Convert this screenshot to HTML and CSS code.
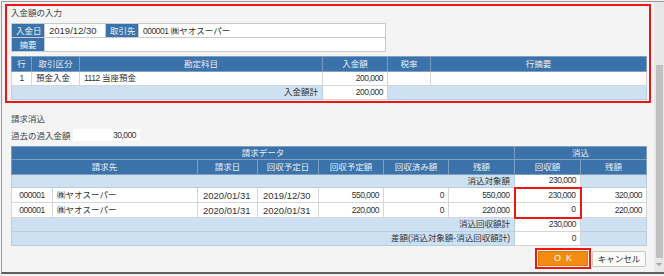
FILE: index.html
```html
<!DOCTYPE html>
<html lang="ja">
<head>
<meta charset="utf-8">
<title>入金額の入力</title>
<link rel="stylesheet" href="styles.css">
</head>
<body>
<div class="window">
  <div class="content">
    <section class="entry">
      <div class="sec-title">入金額の入力</div>
      <table class="info">
        <colgroup><col class="w33"><col class="w61"><col class="w33"><col class="w247"></colgroup>
        <tr><th>入金日</th><td class="date">2019/12/30</td><th>取引先</th><td><span class="num">000001</span> ㈱ヤオスーパー</td></tr>
        <tr><th>摘要</th><td colspan="3"></td></tr>
      </table>
      <table class="grid">
        <colgroup><col class="w20"><col class="w48"><col class="w243"><col class="w65"><col class="w43"><col class="w216"></colgroup>
        <thead>
          <tr class="h15"><th>行</th><th>取引区分</th><th>勘定科目</th><th>入金額</th><th>税率</th><th>行摘要</th></tr>
        </thead>
        <tbody>
          <tr class="h14"><td class="c num">1</td><td>預金入金</td><td><span class="num">1112</span> 当座預金</td><td class="r num">200,000</td><td></td><td></td></tr>
          <tr class="h14 sum"><td colspan="3" class="r">入金額計</td><td class="r num val">200,000</td><td colspan="2"></td></tr>
        </tbody>
      </table>
    </section>

    <section class="bill">
      <div class="sec2-title">請求消込</div>
      <div class="past">
        <span class="past-label">過去の過入金額</span>
        <span class="past-box num">30,000</span>
      </div>
      <table class="grid">
        <colgroup><col class="w41"><col class="w145"><col class="w60"><col class="w61"><col class="w65"><col class="w65"><col class="w66"><col class="w66"><col class="w66"></colgroup>
        <thead>
          <tr class="h13"><th colspan="7">請求データ</th><th colspan="2">消込</th></tr>
          <tr class="h15"><th colspan="2">請求先</th><th>請求日</th><th>回収予定日</th><th>回収予定額</th><th>回収済み額</th><th>残額</th><th>回収額</th><th>残額</th></tr>
        </thead>
        <tbody>
          <tr class="h13 sum"><td colspan="7" class="r">消込対象額</td><td class="r num val">230,000</td><td></td></tr>
          <tr class="h15"><td class="c num">000001</td><td>㈱ヤオスーパー</td><td class="date">2020/01/31</td><td class="date">2019/12/30</td><td class="r num">550,000</td><td class="r num">0</td><td class="r num">550,000</td><td class="r num mark-top">230,000</td><td class="r num">320,000</td></tr>
          <tr class="h15"><td class="c num">000001</td><td>㈱ヤオスーパー</td><td class="date">2020/01/31</td><td class="date">2020/01/31</td><td class="r num">220,000</td><td class="r num">0</td><td class="r num">220,000</td><td class="r num mark-bottom">0</td><td class="r num">220,000</td></tr>
          <tr class="h14 sum"><td colspan="7" class="r">消込回収額計</td><td class="r num val">230,000</td><td></td></tr>
          <tr class="h14 sum"><td colspan="7" class="r">差額(消込対象額-消込回収額計)</td><td class="r num val">0</td><td></td></tr>
        </tbody>
      </table>
      <div class="actions">
        <div class="ok-wrap"><button class="btn-ok" type="button">OK</button></div>
        <button class="btn-cancel" type="button">キャンセル</button>
      </div>
    </section>
  </div>
  <div class="scrollbar">
    <div class="thumb"></div>
    <div class="arrow"></div>
  </div>
</div>
</body>
</html>
```

FILE: styles.css
```css
* { box-sizing: border-box; }
html, body { margin: 0; padding: 0; background: #f2f2f2; }
body {
  font-family: "Liberation Sans", "Noto Sans CJK JP", sans-serif;
  font-size: 8.5px;
  color: #333;
}

.window {
  margin: 1px 0 0 1px;
  width: 663px;
  height: 273px;
  border-top: 1px solid #9c9c9c;
  border-left: 1px solid #9c9c9c;
  border-bottom: 2px solid #5e5e5e;
  background: #f4f4f4;
  display: flex;
}

.content {
  width: 651px;
  padding: 2px 0 0 3px;
}

.entry {
  width: 646px;
  border: 2px solid #ee1515;
  padding: 0 0 1px 4px;
}

.sec-title {
  height: 17px;
  line-height: 14px;
  color: #444;
}

.num {
  font-family: "Liberation Sans", sans-serif;
  font-size: 8.5px;
  letter-spacing: -0.5px;
}
.date { font-size: 9.5px; }
.c { text-align: center; }
.r { text-align: right; }

/* info table */
.info {
  border-collapse: collapse;
  table-layout: fixed;
  width: 374px;
  margin-bottom: 4px;
}
.info th, .info td {
  height: 14px;
  padding: 0 4px;
  line-height: 12px;
  border: 1px solid #c9c9c9;
  white-space: nowrap;
}
.info th {
  background: #3a72a9;
  color: #eef3f9;
  font-weight: normal;
  text-align: center;
  border-color: #c3ccd6;
}
.info td { background: #fff; }

.w20 { width: 20px; } .w33 { width: 33px; } .w41 { width: 41px; } .w43 { width: 43px; }
.w48 { width: 48px; } .w60 { width: 60px; } .w61 { width: 61px; } .w65 { width: 65px; }
.w66 { width: 66px; } .w145 { width: 145px; } .w216 { width: 216px; } .w243 { width: 243px; }
.w247 { width: 247px; }

/* grids */
.grid {
  border-collapse: collapse;
  table-layout: fixed;
  width: 635px;
  border: 1px solid #c2c5a8;
}
.grid th, .grid td {
  padding: 0 4px;
  line-height: 11px;
  white-space: nowrap;
  overflow: hidden;
  vertical-align: middle;
}
.grid th {
  background: #3a72a9;
  color: #e9f0f7;
  font-weight: normal;
  text-align: center;
  border: 1px solid #7f9fc0;
}
.grid td {
  background: #fff;
  border: 1px solid #d6d6d6;
}
.grid .sum td {
  background: #cde1f3;
  border-color: #b9cde0;
}
.grid .sum td.val { background: #fff; border-color: #d6d6d6; }
.grid .date { padding-left: 5px; }

.h13 th, .h13 td { height: 13px; }
.h14 th, .h14 td { height: 14px; }
.h15 th, .h15 td { height: 15px; }

.grid td.mark-top {
  border-top: 2px solid #ee1515;
  border-left: 2px solid #ee1515;
  border-right: 2px solid #ee1515;
}
.grid td.mark-bottom {
  border-bottom: 2px solid #ee1515;
  border-left: 2px solid #ee1515;
  border-right: 2px solid #ee1515;
}

/* second section */
.bill { padding: 0 7px 0 6px; }
.sec2-title {
  height: 24px;
  padding-top: 10px;
  line-height: 12px;
  color: #444;
}
.past {
  display: flex;
  align-items: center;
  height: 12px;
  margin: 2px 0 5px;
}
.past-label { width: 62px; color: #444; }
.past-box {
  width: 67px;
  height: 12px;
  line-height: 12px;
  background: #fff;
  text-align: right;
  padding-right: 4px;
}

.actions {
  display: flex;
  justify-content: flex-end;
  align-items: center;
  margin-top: 2px;
  gap: 1px;
}
.ok-wrap {
  border: 2px solid #ee1515;
  padding: 1px;
}
.btn-ok {
  display: block;
  width: 50px;
  height: 15px;
  padding: 0;
  border: 1px solid #dd7a00;
  background: #f28b10;
  color: #fff;
  font-family: "Liberation Sans", sans-serif;
  font-size: 9px;
  letter-spacing: 5px;
  text-indent: 5px;
  line-height: 13px;
}
.btn-cancel {
  width: 54px;
  height: 16px;
  padding: 0;
  border: 1px solid #c9c9b2;
  border-radius: 2px;
  background: #fafaf8;
  color: #333;
  font-family: "Liberation Sans", "Noto Sans CJK JP", sans-serif;
  font-size: 8.5px;
  line-height: 14px;
}

/* scrollbar */
.scrollbar {
  width: 11px;
  margin-left: 1px;
  background: #e7e7e7;
  display: flex;
  flex-direction: column;
  align-items: center;
  padding-top: 63px;
}
.thumb {
  width: 7px;
  height: 193px;
  background: #c1c1c1;
}
.arrow {
  margin-top: 5px;
  width: 0;
  height: 0;
  border-left: 3px solid transparent;
  border-right: 3px solid transparent;
  border-top: 3px solid #a2a2a2;
}
```
